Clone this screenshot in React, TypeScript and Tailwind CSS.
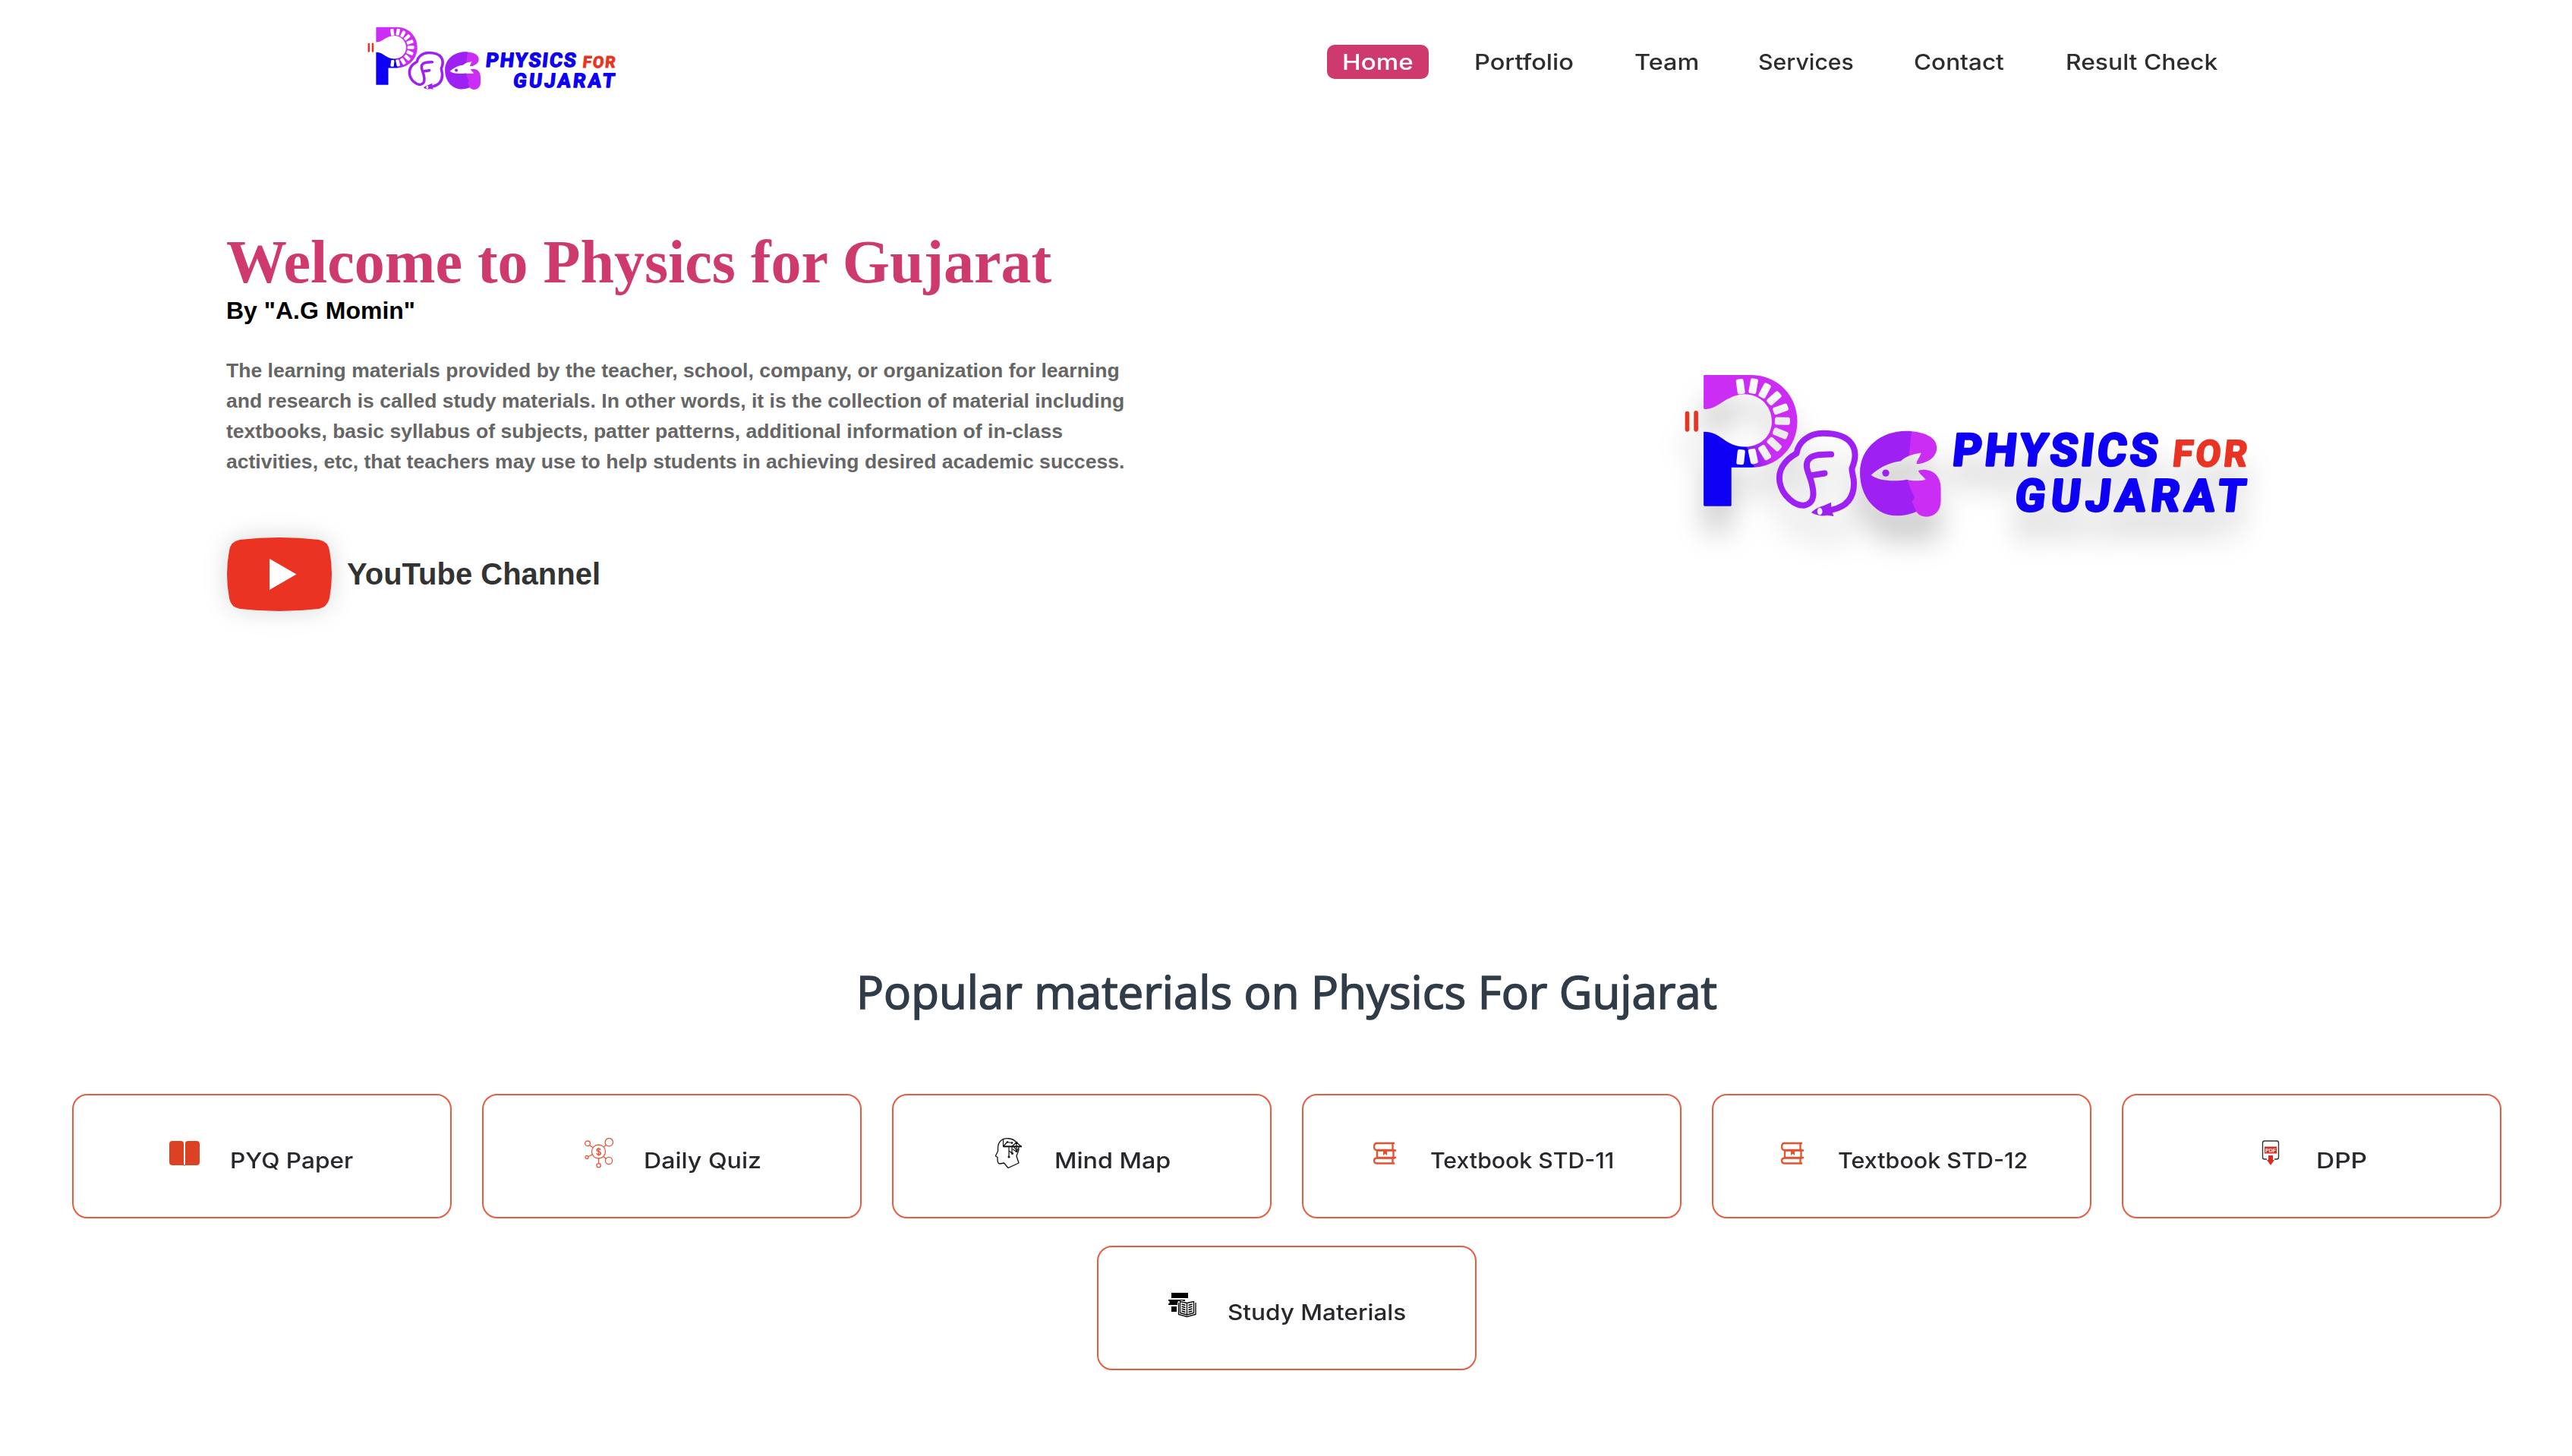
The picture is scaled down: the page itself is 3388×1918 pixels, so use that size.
import React from "react";

function Logo({ className }: { className: string }) {
  const teeth = [
    [278, 118, -8], [329, 116, 10], [374, 134, 28], [411, 164, 48], [437, 207, 70], [444, 254, 91],
    [436, 303, 112], [412, 346, 133], [374, 379, 148], [328, 394, 168], [279, 397, 6],
  ];
  return (
    <svg className={className} viewBox="50 60 2240 580" overflow="visible">
      <defs>
        <linearGradient id="lowerP" gradientUnits="userSpaceOnUse" x1="320" y1="410" x2="430" y2="370">
          <stop offset="0" stopColor="#0d00f5" />
          <stop offset="0.04" stopColor="#8f20f3" />
          <stop offset="0.3" stopColor="#a824f3" />
          <stop offset="0.7" stopColor="#cb2df5" />
        </linearGradient>
        <mask id="teeth" maskUnits="userSpaceOnUse" x="0" y="0" width="700" height="700">
          <rect width="700" height="700" fill="white" />
          {teeth.map(([x, y, a], i) => (
            <rect key={i} x={x - 15} y={y - 30} width="30" height="60" rx="8" fill="black" transform={`rotate(${a} ${x} ${y})`} />
          ))}
        </mask>
        <mask id="fish" maskUnits="userSpaceOnUse" x="700" y="200" width="500" height="500">
          <rect x="700" y="200" width="500" height="500" fill="white" />
          <path fill="black" d="M795 468C830 437 870 417 912 413C935 392 960 386 993 380C987 400 975 410 975 425L1062 424V430L982 450C985 465 1000 470 1011 487C985 493 955 491 937 486C885 496 820 490 795 468Z" />
        </mask>
      </defs>
      <g mask="url(#teeth)">
        <path fill="#cb2df5" d="M132 75Q132 72 136 72H320C424 72 503 152 503 256H402C402 195 355 148 293 148C215 152 195 207 137 207Q132 207 132 202Z" />
        <path fill="url(#lowerP)" d="M503 255C503 358 424 438 320 438H242V588Q242 591 238 591H136Q132 591 132 587V297C205 297 215 356 293 356C355 356 402 315 402 255Z" />
      </g>
      <path d="M67 224V288M102 222V288" stroke="#e93323" strokeWidth="17" strokeLinecap="round" />
      <g fill="none" stroke="#9f20f3" strokeWidth="24" strokeLinejoin="round">
        <path d="M642 605C700 592 727 555 727 500C727 475 718 460 719 442C735 405 735 370 718 345C695 312 645 303 605 303C550 303 508 335 500 382C445 412 427 455 433 495C442 550 495 592 530 588C575 580 568 535 561 505C552 465 530 435 545 410C560 386 592 387 637 386" strokeLinecap="round" />
        <path d="M556 470L611 461" strokeLinecap="round" />
      </g>
      <path fill="#9f20f3" fillRule="evenodd" d="M558 617C580 593 605 592 617 585L637 576V604L647 631L622 627C600 632 580 629 558 617ZM592 598A10 14 0 1 0 592.1 598Z" />
      <g mask="url(#fish)">
        <path fill="#9f20f3" d="M957 295C850 284 751 350 751 460C751 560 820 629 893 629C930 629 955 621 977 612L985 573L985 557L970 522L960 485L950 395Z" />
        <path fill="#cb2df5" d="M955 295C1012 300 1055 320 1055 360C1055 400 1015 422 975 425L930 440L945 388Z" />
        <path fill="#cb2df5" d="M980 450C1030 438 1071 465 1071 520V570C1071 610 1045 633 1015 633C992 633 980 624 973 611L957 573L968 557L950 520L937 480Z" />
      </g>
      <circle cx="853" cy="460" r="14" fill="#9f20f3" />
      <g fontFamily="Roboto, sans-serif" fontWeight="700" strokeLinejoin="round">
        <text transform="translate(1114 431) skewX(-6)" fontSize="176" textLength="810" lengthAdjust="spacing" fill="#0d00f5" stroke="#0d00f5" strokeWidth="10">PHYSICS</text>
        <text transform="translate(1985 433) skewX(-6)" fontSize="143" textLength="294" lengthAdjust="spacing" fill="#e93323" stroke="#e93323" strokeWidth="7">FOR</text>
        <text transform="translate(1361 611) skewX(-6)" fontSize="175" textLength="910" lengthAdjust="spacing" fill="#0d00f5" stroke="#0d00f5" strokeWidth="10">GUJARAT</text>
      </g>
    </svg>
  );
}

const BookIcon = () => (
  <svg className="size-10" viewBox="0 0 40 40" fill="#dd4124">
    <path d="M4 4H15Q19 4 19 7V36H4Q0 36 0 32V8Q0 4 4 4ZM25 4H36Q40 4 40 8V32Q40 36 36 36H21V7Q21 4 25 4Z" />
    <path d="M19.4 35H20.6V37H19.4Z" />
  </svg>
);

const QuizIcon = () => (
  <svg className="size-10" viewBox="0 0 40 40" fill="none" stroke="#e4573d" strokeWidth="1.3">
    <circle cx="18.5" cy="18" r="9" />
    <circle cx="4" cy="7.3" r="3.3" />
    <circle cx="32.3" cy="5.7" r="5.2" />
    <circle cx="3" cy="25.4" r="2" />
    <circle cx="32" cy="30" r="4.6" />
    <circle cx="18.6" cy="36.3" r="2.6" />
    <path d="M7 10L11.5 12.8M28.5 9.5L25 12.3M5 24.5L10.3 22M25 24.5L28.5 27.5M18.6 27V33.5" />
    <path strokeWidth="1.5" d="M21.3 15.5C20.6 13.6 16 13.7 16 16C16 18.3 21.3 17.5 21.3 20.2C21.3 22.6 16.4 22.6 15.8 20.3M18.5 12.7V23.7" />
  </svg>
);

const MindIcon = () => (
  <svg className="size-10" viewBox="0 0 40 40" fill="none" stroke="#111" strokeWidth="1.3" strokeLinejoin="round">
    <path d="M29 5C25 0 14 -1 9 4C4 9 6 14 5.5 17C5 20 2 23 2.5 24L5 25.5V28C5 31 6 34 8 34L13.500 33L19 39.500L33 33L30 24C31 20 33 18 33 14" />
    <path strokeWidth="1.2" d="M12.500 2V11.500M12.500 11.500L17 6M18 5.500L24 6.500M20 11V25M24 11V20M20 17L24 20M24 11L30 6V18L25 15M30 6L36 11M30 16L26 11M30 18L34 11" />
    <path strokeWidth="2" d="M12.500 11.300H37" />
    <circle cx="20" cy="25" r="1.500" fill="#111" stroke="none" />
    <circle cx="24.500" cy="20.500" r="1.500" fill="#111" stroke="none" />
    <circle cx="18" cy="5.500" r="1.300" fill="#111" stroke="none" />
    <circle cx="24" cy="6.500" r="1.300" fill="#111" stroke="none" />
    <circle cx="30" cy="6" r="1.500" fill="#111" stroke="none" />
    <circle cx="30" cy="17.500" r="1.500" fill="#111" stroke="none" />
  </svg>
);

const BooksIcon = () => (
  <svg className="size-10" viewBox="0 0 40 40" fill="none" stroke="#e4512f" strokeWidth="2.3">
    <path d="M33 7H9.500C5 7 5 16 9.500 16H33M30.500 7V16" />
    <path d="M35 16.500H10M35 26H10M10 16.500V26M31.500 16.500V26" />
    <path d="M33 26.500H9.500C5 26.500 5 33.500 9.500 33.500H33M30.500 26V33.500" />
    <path d="M18 17V23L20.500 21L23 23V17Z" fill="#e4512f" stroke="none" />
  </svg>
);

const PdfIcon = () => (
  <svg className="size-10" viewBox="0 0 40 40">
    <path d="M15 28H12Q9.500 28 9.500 25.500V6.500Q9.500 4 12 4H28Q30.500 4 30.500 6.500V25.500Q30.500 28 28 28H25" fill="none" stroke="#333" strokeWidth="1.400" />
    <rect x="12" y="11.500" width="16" height="9" fill="#dc2a20" />
    <text x="20" y="18.600" textAnchor="middle" fontSize="7" fontWeight="700" fontFamily="Liberation Sans, sans-serif" fill="#fff">PDF</text>
    <path d="M17 23H23V29H25L20 36L15 29H17Z" fill="#dc2a20" />
  </svg>
);

const StudyIcon = () => (
  <svg className="size-10" viewBox="0 0 40 40">
    <path d="M6 4H28V11H6ZM2 13H24V15L14 17V20H2V18.500L3.500 18V15L2 14.500ZM6 22H13V29H6Z" />
    <path d="M14.500 15.500L20 14L26.500 16.500L32 14L38.500 16V33.500L26.500 36.500L14.500 33.500Z" fill="#fff" />
    <path d="M15.500 17V32.500L26.500 35.500L38 32.500V17M17.500 15.500V30.500L26.500 33L35.500 30.500V15.500L26.500 17.500ZM26.500 17V33" fill="none" stroke="#000" strokeWidth="1.300" />
    <path d="M19.500 19L24.500 20.500M19.500 22L24.500 23.500M19.500 25L24.500 26.500M19.500 28L24.500 29.500M33.500 19L28.500 20.500M33.500 22L28.500 23.500M33.500 25L28.500 26.500M33.500 28L28.500 29.500" stroke="#000" strokeWidth="1.400" />
  </svg>
);

const nav = [
  { label: "Home", box: "w-[134px] rounded-[10px] bg-[#cf3a6e] text-white", stretch: "scale-x-[1.143]" },
  { label: "Portfolio", box: "w-[171px] ml-[40px]", stretch: "scale-x-[1.123]" },
  { label: "Team", box: "w-[123px] ml-[40px]", stretch: "scale-x-[1.118]" },
  { label: "Services", box: "w-[165px] ml-[40px]", stretch: "scale-x-[1.042]" },
  { label: "Contact", box: "w-[160px] ml-[40px]", stretch: "scale-x-[1.087]" },
  { label: "Result Check", box: "w-[241px] ml-[40px]", stretch: "scale-x-[1.097]" },
];

const cards = [
  { label: "PYQ Paper", Icon: BookIcon, pad: "pl-[126px]", text: "ml-[40px] scale-x-[1.09]" },
  { label: "Daily Quiz", Icon: QuizIcon, pad: "pl-[133px]", text: "ml-[38px] scale-x-[1.108]" },
  { label: "Mind Map", Icon: MindIcon, pad: "pl-[132px]", text: "ml-[40px] scale-x-[1.113]" },
  { label: "Textbook STD-11", Icon: BooksIcon, pad: "pl-[87px]", text: "ml-[40px] scale-x-[1.042]" },
  { label: "Textbook STD-12", Icon: BooksIcon, pad: "pl-[84px]", text: "ml-[40px] scale-x-[1.05]" },
  { label: "DPP", Icon: PdfIcon, pad: "pl-[174px]", text: "ml-[40px] scale-x-[1.153]" },
  { label: "Study Materials", Icon: StudyIcon, pad: "pl-[90px]", text: "ml-[40px] scale-x-[1.087]" },
];

export default function App() {
  return (
    <div className="min-h-[1918px] w-full bg-white font-[Inter,sans-serif]">
      <header className="flex h-[163px] items-start pl-[483px]">
        <Logo className="mt-[34px] h-[85px] w-[329px]" />
        <nav className="ml-[936px] mt-[59px] flex text-[29px] font-medium leading-[45px] text-[#2b2d2f]">
          {nav.map((n) => (
            <a key={n.label} className={`block h-[45px] whitespace-nowrap pl-[20px] ${n.box}`}>
              <span className={`inline-block origin-left ${n.stretch}`}>{n.label}</span>
            </a>
          ))}
        </nav>
      </header>
      <section className="flex h-[1097px] items-start pl-[298px]">
        <div className="w-[1240px] pt-[137px] font-['Liberation_Sans',sans-serif] font-bold">
          <h1 className="font-['Liberation_Serif',serif] text-[80px] leading-[91px] text-[#cf3a6e]">Welcome to Physics for Gujarat</h1>
          <h2 className="text-[32px] leading-[36px] text-black">By "A.G Momin"</h2>
          <p className="mt-[41px] whitespace-nowrap text-[26.55px] leading-[40px] text-[#666]">
            The learning materials provided by the teacher, school, company, or organization for learning<br />
            and research is called study materials. In other words, it is the collection of material including<br />
            textbooks, basic syllabus of subjects, patter patterns, additional information of in-class<br />
            activities, etc, that teachers may use to help students in achieving desired academic success.
          </p>
          <div className="mt-[80px] flex items-center">
            <svg className="ml-px h-[97px] w-[138px] drop-shadow-[0_0_16px_rgba(0,0,0,0.15)]" viewBox="0 0 138 97" overflow="visible">
              <path fill="#ea3323" d="M17 3Q69 -3 121 3Q133 5 135 17Q141 48.500 135 80Q132 92 121 94Q69 100 17 94Q5 92 3 80Q-3 48.500 3 17Q5 5 17 3Z" />
              <path fill="#fff" d="M56 28V69L91.500 48.500Z" />
            </svg>
            <span className="ml-[20px] pb-[2px] text-[40px] leading-[48px] text-[#333]">YouTube Channel</span>
          </div>
        </div>
        <Logo className="ml-[678px] mt-[327px] h-[193px] w-[747px] drop-shadow-[0_34px_18px_rgba(0,0,0,0.2)]" />
      </section>
      <h2 className="h-[181px] pl-[1128px] pt-[5px] font-['Open_Sans',sans-serif] text-[60px] leading-[82px] text-[#303c48] [-webkit-text-stroke:1.6px_#303c48]">Popular materials on Physics For Gujarat</h2>
      <section className="ml-[95px] flex w-[3200px] flex-wrap justify-center gap-x-10 gap-y-9">
        {cards.map(({ label, Icon, pad, text }) => (
          <div key={label} className={`flex h-[164px] w-[500px] items-start rounded-[20px] border-2 border-[#e85c42] pt-[56px] ${pad}`}>
            <Icon />
            <span className={`mt-[7px] origin-left whitespace-nowrap text-[29px] font-medium leading-[45px] text-[#26282c] ${text}`}>{label}</span>
          </div>
        ))}
      </section>
    </div>
  );
}
